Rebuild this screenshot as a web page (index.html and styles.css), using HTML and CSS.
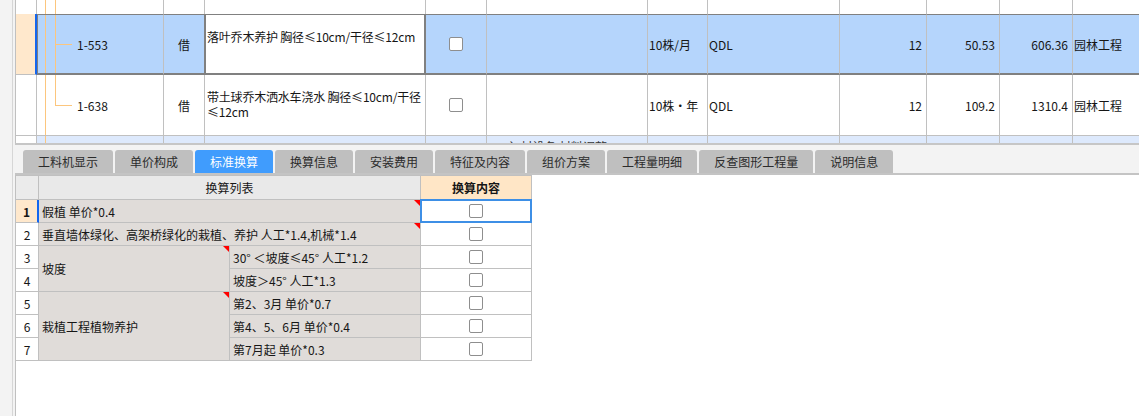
FILE: index.html
```html
<!DOCTYPE html>
<html lang="zh-CN">
<head>
<meta charset="utf-8">
<title>标准换算</title>
<link rel="stylesheet" href="styles.css">
</head>
<body>
<div class="app">
  <div class="upper">
    <div class="row r0">
      <div class="c hdr"></div>
      <div class="c code"><span class="tl tl1"></span><span class="tl tl2"></span></div>
      <div class="c jie"></div>
      <div class="c desc"></div>
      <div class="c ckc"></div>
      <div class="c"></div>
      <div class="c"></div>
      <div class="c"></div>
      <div class="c"></div>
      <div class="c"></div>
      <div class="c"></div>
      <div class="c"></div>
    </div>
    <div class="row r1">
      <div class="c hdr"></div>
      <div class="c code"><span class="tl tl1"></span><span class="tl tl2"></span><span class="br"></span>1-553</div>
      <div class="c jie">借</div>
      <div class="c desc">落叶乔木养护 胸径≤10cm/干径≤12cm</div>
      <div class="c ckc"><span class="cb"></span></div>
      <div class="c"></div>
      <div class="c txt">10株/月</div>
      <div class="c txt">QDL</div>
      <div class="c num">12</div>
      <div class="c num">50.53</div>
      <div class="c num">606.36</div>
      <div class="c txt">园林工程</div>
    </div>
    <div class="row r2">
      <div class="c hdr"></div>
      <div class="c code"><span class="tl tl1"></span><span class="tl tl2 half"></span><span class="br"></span>1-638</div>
      <div class="c jie">借</div>
      <div class="c desc">带土球乔木洒水车浇水 胸径≤10cm/干径<br>≤12cm</div>
      <div class="c ckc"><span class="cb"></span></div>
      <div class="c"></div>
      <div class="c txt">10株・年</div>
      <div class="c txt">QDL</div>
      <div class="c num">12</div>
      <div class="c num">109.2</div>
      <div class="c num">1310.4</div>
      <div class="c txt">园林工程</div>
    </div>
    <div class="row r3">
      <div class="c hdr"></div>
      <div class="c code"><span class="tl tl1"></span></div>
      <div class="c jie"></div>
      <div class="c desc"></div>
      <div class="c ckc"></div>
      <div class="c cut">· 主 材设备 材料调整</div>
      <div class="c"></div>
      <div class="c"></div>
      <div class="c"></div>
      <div class="c"></div>
      <div class="c"></div>
      <div class="c"></div>
    </div>
  </div>
  <div class="sep"></div>
  <div class="tabbar">
    <div class="tab">工料机显示</div>
    <div class="tab">单价构成</div>
    <div class="tab on">标准换算</div>
    <div class="tab">换算信息</div>
    <div class="tab">安装费用</div>
    <div class="tab">特征及内容</div>
    <div class="tab">组价方案</div>
    <div class="tab">工程量明细</div>
    <div class="tab">反查图形工程量</div>
    <div class="tab">说明信息</div>
  </div>
  <div class="lower">
    <div class="sgrid">
      <div class="s rh top"></div>
      <div class="s hd span2">换算列表</div>
      <div class="s hd2">换算内容</div>

      <div class="s rh cur">1</div>
      <div class="s span2 flag">假植 单价*0.4</div>
      <div class="s ck sel"><span class="cb"></span></div>

      <div class="s rh">2</div>
      <div class="s span2 flag">垂直墙体绿化、高架桥绿化的栽植、养护 人工*1.4,机械*1.4</div>
      <div class="s ck"><span class="cb"></span></div>

      <div class="s rh">3</div>
      <div class="s rows2 flag">坡度</div>
      <div class="s">30° ＜坡度≤45°  人工*1.2</div>
      <div class="s ck"><span class="cb"></span></div>

      <div class="s rh">4</div>
      <div class="s">坡度＞45°  人工*1.3</div>
      <div class="s ck"><span class="cb"></span></div>

      <div class="s rh">5</div>
      <div class="s rows3 flag">栽植工程植物养护</div>
      <div class="s">第2、3月 单价*0.7</div>
      <div class="s ck"><span class="cb"></span></div>

      <div class="s rh">6</div>
      <div class="s">第4、5、6月 单价*0.4</div>
      <div class="s ck"><span class="cb"></span></div>

      <div class="s rh">7</div>
      <div class="s">第7月起 单价*0.3</div>
      <div class="s ck"><span class="cb"></span></div>
    </div>
  </div>
</div>
</body>
</html>
```
FILE: styles.css
```css
* { box-sizing: border-box; }
html, body { margin: 0; height: 100%; }
body {
  background: #f3f3f3;
  font-family: "Noto Sans CJK SC", "Noto Sans", sans-serif;
  font-size: 12px;
  color: #161616;
  overflow: hidden;
}
.app {
  margin-left: 12px;
  border-left: 1px solid #d6d6d6;
  padding-left: 2px;
  height: 416px;
  display: flex;
  flex-direction: column;
}

/* upper grid */
.upper {
  flex: none;
  border-left: 1px solid #c0c0c0;
  background: #fff;
  overflow: hidden;
}
.row {
  display: grid;
  grid-template-columns: 21px 127px 41px 221px 61px 161px 60px 132px 87px 73px 73px 100px;
}
.c {
  position: relative;
  display: flex;
  align-items: center;
  border-right: 1px solid #c0c0c0;
  border-bottom: 1px solid #c0c0c0;
  white-space: nowrap;
  line-height: 15px;
}
.r0 { height: 14px; }
.r0 .c:not(.hdr) { border-bottom-color: #808080; }
.r1, .r2 { height: 61px; }
.r1 .c {
  background: #b5d5fc;
  border-top: 1px solid #808080;
  border-bottom: 2px solid #808080;
}
.r1 .hdr {
  background: #ffe8cc;
  border-top: 0;
  border-bottom: 1px solid #c0c0c0;
  border-right: 2px solid #1466ef;
}
.r1 .code { box-shadow: inset 1px 0 #808080; }
.r1 .jie { border-right-color: #808080; }
.r1 .desc {
  background: #fff;
  box-shadow: inset 1px 0 #808080;
  border-right: 2px solid #808080;
}
.r3 { height: 7px; }
.r3 .c {
  background: #dde9fc;
  border-bottom: 0;
  overflow: hidden;
  align-items: flex-start;
}
.r3 .hdr { background: #fff; }
.cut { padding: 3px 0 0 4px; color: #333; }

.code { padding-left: 40px; }
.tl {
  position: absolute;
  top: 0;
  bottom: 0;
  width: 1px;
  background: #fcc67e;
}
.tl1 { left: 8px; }
.tl2 { left: 18px; }
.tl2.half { bottom: 50%; }
.br {
  position: absolute;
  left: 18px;
  top: 50%;
  width: 17px;
  height: 1px;
  background: #fcc67e;
}
.jie { justify-content: center; }
.desc {
  display: block;
  padding: 14px 0 0 2px;
  white-space: nowrap;
  overflow: hidden;
  letter-spacing: -0.2px;
}
.ckc { justify-content: center; }
.txt { padding-left: 1px; }
.num { justify-content: flex-end; padding-right: 4px; }

.cb {
  display: block;
  width: 14px;
  height: 14px;
  border: 1px solid #8e8e8e;
  border-radius: 2px;
  background: #fff;
}

.sep { flex: none; height: 2px; background: #c6c6c6; }

/* tabs */
.tabbar {
  flex: none;
  height: 30px;
  padding: 5px 0 0 8px;
  display: flex;
  gap: 2px;
  border-bottom: 2px solid #c4c4c4;
}
.tab {
  height: 23px;
  padding: 0 15px;
  background: #bfbfbf;
  border-radius: 3px 3px 0 0;
  color: #2b2b2b;
  display: flex;
  align-items: center;
  white-space: nowrap;
}
.tab.on { background: #409cfd; color: #fff; }

/* lower grid */
.lower {
  flex: 1;
  background: #fff;
  border-left: 1px solid #c0c0c0;
}
.sgrid {
  display: grid;
  grid-template-columns: 23px 191px 191px 111px;
  grid-template-rows: 24px repeat(7, 23px);
  width: 516px;
  border-top: 1px solid #c0c0c0;
}
.s {
  position: relative;
  display: flex;
  align-items: center;
  padding-left: 3px;
  background: #e0dcd9;
  border-right: 1px solid #c0c0c0;
  border-bottom: 1px solid #c0c0c0;
  white-space: nowrap;
}
.span2 { grid-column: span 2; }
.rows2 { grid-row: span 2; }
.rows3 { grid-row: span 3; }
.s.rh { background: #fff; justify-content: center; padding: 0; }
.s.rh.top { background: #ebebeb; }
.s.rh.cur {
  background: #ffe8cc;
  font-weight: bold;
  border-right: 2px solid #1466ef;
}
.s.hd { background: #e9e9e9; justify-content: center; padding: 0; }
.s.hd2 { background: #ffe6c6; font-weight: bold; justify-content: center; padding: 0; }
.s.ck { background: #fff; justify-content: center; padding: 0; }
.s.sel::before {
  content: "";
  position: absolute;
  top: -1px;
  left: -1px;
  right: -1px;
  bottom: -1px;
  border: 2px solid #3d8fe6;
}
.flag::after {
  content: "";
  position: absolute;
  top: 0;
  right: 0;
  border-top: 6px solid #f00;
  border-left: 6px solid transparent;
}
```
